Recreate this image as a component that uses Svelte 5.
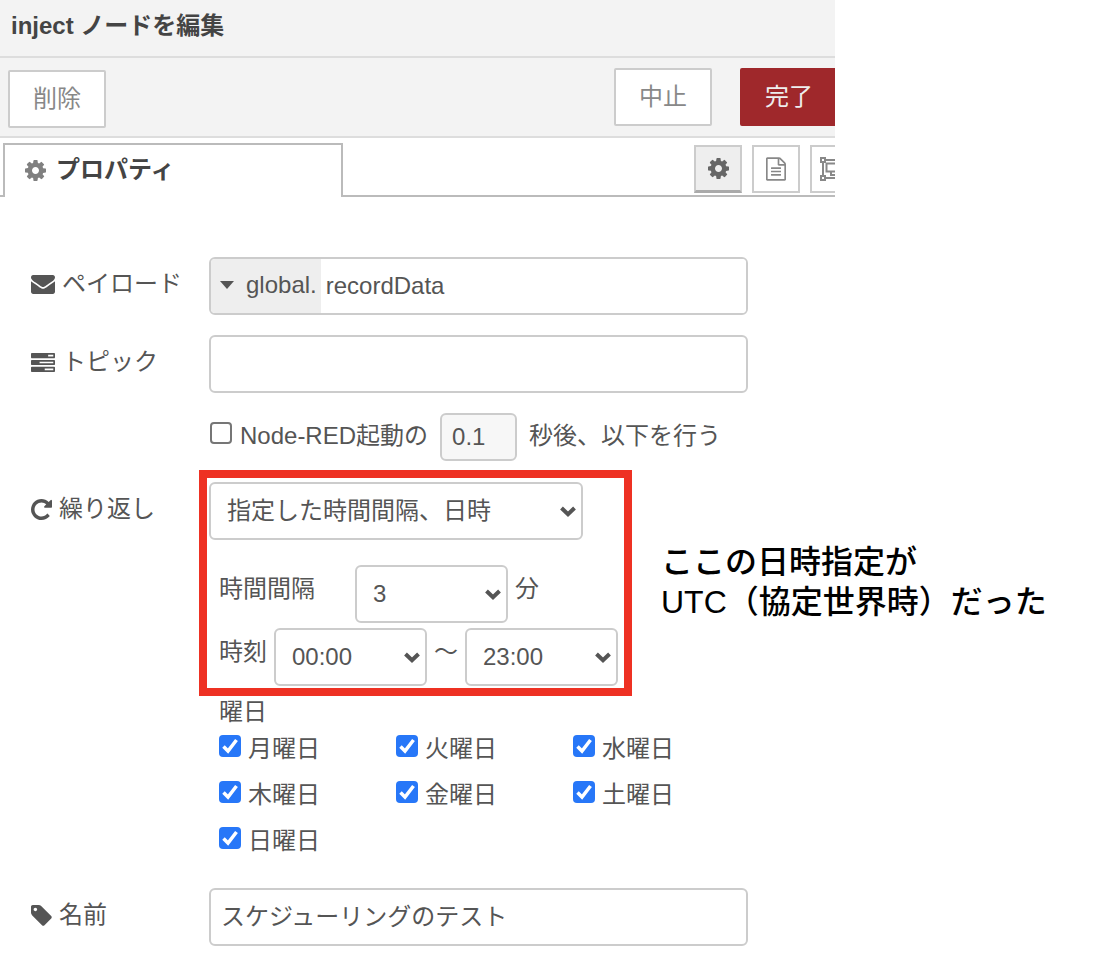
<script>
  const icons = {
    cog: {
      box: '128 128 1536 1536', w: 21, h: 21,
      d: 'M1152 896q0-106-75-181t-181-75-181 75-75 181 75 181 181 75 181-75 75-181zm512-109v222q0 12-8 23t-20 13l-185 28q-19 54-39 91 35 50 107 138 10 12 10 25t-9 23q-27 37-99 108t-94 71q-12 0-26-9l-138-108q-44 23-91 38-16 136-29 186-7 28-36 28h-222q-14 0-24.5-8.5t-11.5-21.5l-28-184q-49-16-90-37l-141 107q-10 9-25 9-14 0-25-11-126-114-165-168-7-10-7-23 0-12 8-23 15-21 51-66.5t54-70.5q-27-50-41-99l-183-27q-13-2-21-12.5t-8-23.5v-222q0-12 8-23t19-13l186-28q14-46 39-92-40-57-107-138-10-12-10-24 0-10 9-23 26-36 98.5-107.5t94.5-71.5q13 0 26 10l138 107q44-23 91-38 16-136 29-186 7-28 36-28h222q14 0 24.5 8.5t11.5 21.5l28 184q49 16 90 37l142-107q9-9 24-9 13 0 25 10 129 119 165 170 7 8 7 22 0 12-8 23-15 21-51 66.5t-54 70.5q26 50 41 98l183 28q13 2 21 12.5t8 23.5z'
    },
    file: {
      box: '128 0 1536 1792', w: 20, h: 24,
      d: 'M1596 380q28 28 48 76t20 88v1152q0 40-28 68t-68 28h-1344q-40 0-68-28t-28-68v-1600q0-40 28-68t68-28h896q40 0 88 20t76 48zm-444-244v376h376q-10-29-22-41l-313-313q-12-12-41-22zm384 1528v-1024h-416q-40 0-68-28t-28-68v-416h-768v1536h1280zm-1024-864q0-14 9-23t23-9h704q14 0 23 9t9 23v64q0 14-9 23t-23 9h-704q-14 0-23-9t-9-23v-64zm736 224q14 0 23 9t9 23v64q0 14-9 23t-23 9h-704q-14 0-23-9t-9-23v-64q0-14 9-23t23-9h704zm0 256q14 0 23 9t9 23v64q0 14-9 23t-23 9h-704q-14 0-23-9t-9-23v-64q0-14 9-23t23-9h704z'
    },
    envelope: {
      box: '0 256 1792 1408', w: 24, h: 19,
      d: 'M1792 710v794q0 66-47 113t-113 47h-1472q-66 0-113-47t-47-113v-794q44 49 101 87 362 246 497 345 57 42 92.5 65.5t94.5 48 110 24.5h2q51 0 110-24.5t94.5-48 92.5-65.5q170-123 498-345 57-39 100-87zm0-294q0 79-49 151t-122 123q-376 261-468 325-10 7-42.5 31t-54 38.5-52 32.5-57.5 27-50 9h-2q-23 0-50-9t-57.5-27-52-32.5-54-38.5-42.5-31q-91-64-262-182.5t-205-142.5q-62-42-117-115.5t-55-136.5q0-78 41.5-130t118.5-52h1472q65 0 112.5 47t47.5 113z'
    },
    tasks: {
      box: '0 128 1792 1408', w: 24, h: 19,
      d: 'M1024 1408h640v-128h-640v128zm-384-512h1024v-128h-1024v128zm640-512h384v-128h-384v128zm512 832v256q0 26-19 45t-45 19h-1664q-26 0-45-19t-19-45v-256q0-26 19-45t45-19h1664q26 0 45 19t19 45zm0-512v256q0 26-19 45t-45 19h-1664q-26 0-45-19t-19-45v-256q0-26 19-45t45-19h1664q26 0 45 19t19 45zm0-512v256q0 26-19 45t-45 19h-1664q-26 0-45-19t-19-45v-256q0-26 19-45t45-19h1664q26 0 45 19t19 45z'
    },
    repeat: {
      box: '128 128 1536 1536', w: 21, h: 21,
      d: 'M1664 256v448q0 26-19 45t-45 19h-448q-42 0-59-40-17-39 14-69l138-138q-148-137-349-137-104 0-198.5 40.5t-163.5 109.5-109.5 163.5-40.5 198.5 40.5 198.5 109.5 163.5 163.5 109.5 198.5 40.5q119 0 225-52t179-147q7-10 23-12 15 0 25 9l137 138q9 8 9.5 20.5t-7.5 22.5q-109 132-264 204.5t-327 72.5q-156 0-298-61t-245-164-164-245-61-298 61-298 164-245 245-164 298-61q147 0 284.5 55.5t244.5 156.5l130-129q29-31 70-14 39 17 39 59z'
    },
    tag: {
      box: '128 128 1536 1536', w: 21, h: 21,
      d: 'M576 448q0-53-37.5-90.5t-90.5-37.5-90.5 37.5-37.5 90.5 37.5 90.5 90.5 37.5 90.5-37.5 37.5-90.5zm1067 576q0 53-37 90l-491 492q-39 37-91 37-53 0-90-37l-715-716q-38-37-64.5-101t-26.5-117v-416q0-52 38-90t90-38h416q53 0 117 26.5t102 64.5l715 714q37 39 37 91z'
    }
  };

  let payload = $state('recordData');
  let topic = $state('');
  let once = $state(false);
  let delay = $state('0.1');
  let mode = $state('指定した時間間隔、日時');
  let interval = $state('3');
  let from = $state('00:00');
  let to = $state('23:00');
  let name = $state('スケジューリングのテスト');
  let days = $state(
    ['月曜日', '火曜日', '水曜日', '木曜日', '金曜日', '土曜日', '日曜日'].map((label) => ({ label, on: true }))
  );

  const modes = ['なし', '指定した時間間隔', '指定した時間間隔、日時', '指定した日時'];
  const minutes = ['1', '2', '3', '4', '5', '6', '10', '12', '15', '20', '30'];
  const hours = Array.from({ length: 24 }, (_, h) => String(h).padStart(2, '0') + ':00');
</script>

{#snippet icon(key)}
  <svg class="icon" viewBox={icons[key].box} width={icons[key].w} height={icons[key].h} aria-hidden="true">
    <path d={icons[key].d} />
  </svg>
{/snippet}

{#snippet chevron()}
  <svg class="chevron" viewBox="0 0 16 11" width="16" height="11" aria-hidden="true">
    <path d="M1.5 2 8 8.2 14.5 2" />
  </svg>
{/snippet}

<main class="page">
  <section class="viewport">
    <div class="tray">
      <header class="title"><h1>inject ノードを編集</h1></header>

      <div class="toolbar">
        <button type="button" class="btn delete">削除</button>
        <div class="actions">
          <button type="button" class="btn">中止</button>
          <button type="button" class="btn primary">完了</button>
        </div>
      </div>

      <nav class="tabs">
        <a class="tab" href="#properties">{@render icon('cog')}<span>プロパティ</span></a>
        <div class="tab-tools">
          <button type="button" class="tool active" aria-label="プロパティ">{@render icon('cog')}</button>
          <button type="button" class="tool" aria-label="説明">{@render icon('file')}</button>
          <button type="button" class="tool" aria-label="外観">
            <svg class="group" viewBox="0 0 28 24" width="28" height="24" aria-hidden="true">
              <path d="M5 3h18M5 21h18M3 5v14M25 5v14" />
              <path d="M1 1h4v4H1zM23 1h4v4h-4zM1 19h4v4H1zM23 19h4v4h-4z" />
              <path d="M6.5 6.5h10v8h-10zM17 10h4.500v8H11v-3" />
            </svg>
          </button>
        </div>
      </nav>
    </div>
  </section>

  <form class="form" id="properties">
    <div class="row">
      <label class="caption" for="payload">{@render icon('envelope')}ペイロード</label>
      <div class="field typed">
        <button type="button" class="type">
          <svg viewBox="0 0 14 8" width="14" height="8" aria-hidden="true"><path d="M0 0h14L7 8z" /></svg>
          global.
        </button>
        <input id="payload" type="text" bind:value={payload} />
      </div>
    </div>

    <div class="row">
      <label class="caption" for="topic">{@render icon('tasks')}トピック</label>
      <input id="topic" class="field" type="text" bind:value={topic} />
    </div>

    <div class="once">
      <input id="once" class="check" type="checkbox" bind:checked={once} />
      <label for="once">Node-RED起動の</label>
      <input class="delay" type="text" aria-label="秒" bind:value={delay} />
      <span>秒後、以下を行う</span>
    </div>

    <div class="row repeat">
      <label class="caption" for="mode">{@render icon('repeat')}繰り返し</label>
      <div class="schedule">
        <div class="marked">
          <div class="select wide">
            <select id="mode" bind:value={mode}>
              {#each modes as m}<option>{m}</option>{/each}
            </select>
            {@render chevron()}
          </div>
          <div class="line every">
            <label class="interval" for="interval">時間間隔</label>
            <div class="select">
              <select id="interval" bind:value={interval}>
                {#each minutes as m}<option>{m}</option>{/each}
              </select>
              {@render chevron()}
            </div>
            <span>分</span>
          </div>
          <div class="line">
            <label for="from">時刻</label>
            <div class="select">
              <select id="from" bind:value={from}>
                {#each hours as h}<option>{h}</option>{/each}
              </select>
              {@render chevron()}
            </div>
            <label for="to">〜</label>
            <div class="select">
              <select id="to" bind:value={to}>
                {#each hours as h}<option>{h}</option>{/each}
              </select>
              {@render chevron()}
            </div>
          </div>
          <p class="note">ここの日時指定が<br />UTC（協定世界時）だった</p>
        </div>

        <fieldset class="days">
          <legend>曜日</legend>
          <div class="day-grid">
            {#each days as day}
              <label class="day"><input class="check" type="checkbox" bind:checked={day.on} /><span>{day.label}</span></label>
            {/each}
          </div>
        </fieldset>
      </div>
    </div>

    <div class="row">
      <label class="caption" for="name">{@render icon('tag')}名前</label>
      <input id="name" class="field" type="text" bind:value={name} />
    </div>
  </form>
</main>

<style>
  :global(body) {
    background: #fff;
  }
  .page,
  .page * {
    box-sizing: border-box;
  }
  .page {
    padding-right: 261px;
    font-family: 'Liberation Sans', 'Noto Sans CJK JP', sans-serif;
    font-size: 24px;
    line-height: 36px;
    color: #555;
  }
  input,
  select,
  button {
    font: inherit;
    color: inherit;
    margin: 0;
  }
  .icon {
    flex: none;
    fill: currentColor;
  }
  .viewport {
    overflow-x: clip;
  }
  /* The tray is slightly wider than its viewport and slides under its right edge. */
  .tray {
    margin-right: -23px;
  }
  .title {
    padding: 8px 11px 12px;
    background: #f3f3f3;
    border-bottom: 2px solid #ddd;
  }
  h1 {
    margin: 0;
    font-size: 24px;
    line-height: 36px;
    color: #444;
  }
  .toolbar {
    display: flex;
    align-items: flex-start;
    justify-content: space-between;
    height: 80px;
    padding: 10px 20px 8px 8px;
    background: #f3f3f3;
    border-bottom: 2px solid #ddd;
  }
  .btn {
    width: 98px;
    height: 58px;
    padding: 0;
    background: #fff;
    border: 2px solid #ccc;
    border-radius: 2px;
    color: #888;
  }
  .delete {
    margin-top: 2px;
  }
  .actions {
    display: flex;
    gap: 28px;
  }
  .primary {
    background: #9f282b;
    border-color: #9f282b;
    color: #eee;
  }
  .tabs {
    display: flex;
    justify-content: space-between;
    height: 59px;
    padding: 5px 0 0 3px;
    background: linear-gradient(#bbb, #bbb) bottom / 100% 2px no-repeat;
  }
  .tab {
    display: flex;
    align-items: center;
    gap: 10px;
    width: 340px;
    padding: 0 20px 2px;
    background: #fff;
    border: 2px solid #bbb;
    border-bottom: 0;
    color: #444;
    font-weight: bold;
    text-decoration: none;
  }
  .tab .icon {
    color: #808080;
  }
  .tab-tools {
    display: flex;
    gap: 10px;
    padding-top: 2px;
  }
  .tool {
    display: flex;
    align-items: center;
    justify-content: center;
    width: 48px;
    height: 48px;
    padding: 0;
    background: #fff;
    border: 2px solid #ccc;
    color: #888;
  }
  .tool.active {
    background: #eee;
    border-bottom: 3px solid #aaa;
    color: #666;
  }
  .group {
    flex: none;
    fill: none;
    stroke: currentColor;
    stroke-width: 2;
  }
  .form {
    padding: 60px 87px 0 31px;
  }
  .row {
    display: grid;
    grid-template-columns: 178px minmax(0, 1fr);
    margin-bottom: 20px;
  }
  .caption {
    display: flex;
    align-items: center;
    gap: 7px;
    height: 54px;
  }
  .field {
    width: 100%;
    height: 58px;
    padding: 0 10px 6px;
    background: #fff;
    border: 2px solid #ccc;
    border-radius: 6px;
  }
  .typed {
    display: flex;
    padding: 0;
    overflow: hidden;
  }
  .type {
    display: flex;
    align-items: center;
    gap: 12px;
    padding: 0 4px 2px 9px;
    background: #eee;
    border: 0;
  }
  .type svg {
    fill: currentColor;
  }
  .typed input {
    flex: 1;
    min-width: 0;
    padding: 0 5px;
    background: #fff;
    border: 0;
  }
  .check {
    appearance: none;
    flex: none;
    width: 22px;
    height: 22px;
    background: #fff;
    border: 2px solid #767676;
    border-radius: 4px;
  }
  .check:checked {
    border: 0;
    background: #2777f8
      url("data:image/svg+xml,%3Csvg xmlns='http://www.w3.org/2000/svg' viewBox='0 0 22 22'%3E%3Cpath d='M4.500 11.500 9 16 17.500 5' fill='none' stroke='white' stroke-width='3.500'/%3E%3C/svg%3E");
  }
  .once {
    display: flex;
    align-items: flex-start;
    padding-left: 179px;
    line-height: 46px;
  }
  .once .check {
    margin: 9px 8px 0 0;
  }
  .delay {
    width: 77px;
    height: 48px;
    margin: 0 12px;
    padding: 0 10px;
    background: #f7f7f7;
    border: 2px solid #ccc;
    border-radius: 6px;
  }
  .repeat {
    margin-top: 21px;
  }
  .marked {
    position: relative;
    width: 412px;
  }
  .marked::after {
    content: '';
    position: absolute;
    inset: -12px -11px -10px -10px;
    border: 8px solid #ee3123;
    pointer-events: none;
  }
  .note {
    position: absolute;
    left: 452px;
    top: 60px;
    margin: 0;
    font-size: 32px;
    font-weight: 500;
    line-height: 40px;
    color: #000;
    white-space: nowrap;
  }
  .select {
    position: relative;
    width: 153px;
    height: 58px;
  }
  .select.wide {
    width: 374px;
  }
  select {
    appearance: none;
    width: 100%;
    height: 100%;
    padding: 0 40px 0 16px;
    background: #fff;
    border: 2px solid #ccc;
    border-radius: 6px;
  }
  .chevron {
    position: absolute;
    right: 7px;
    top: 24px;
    fill: none;
    stroke: #555;
    stroke-width: 4;
    pointer-events: none;
  }
  .line {
    display: flex;
    gap: 7px;
    margin-top: 5px;
    padding-left: 10px;
    line-height: 48px;
  }
  .every {
    margin-top: 25px;
  }
  .interval {
    width: 129px;
  }
  .days {
    margin: 8px 0 0;
    padding: 0 0 0 10px;
    border: 0;
  }
  legend {
    padding: 0;
  }
  .day-grid {
    display: grid;
    grid-template-columns: repeat(3, 177px);
  }
  .day {
    display: flex;
    gap: 7px;
    height: 46px;
    line-height: 38px;
  }
  .day .check {
    margin-top: 5px;
  }
</style>
